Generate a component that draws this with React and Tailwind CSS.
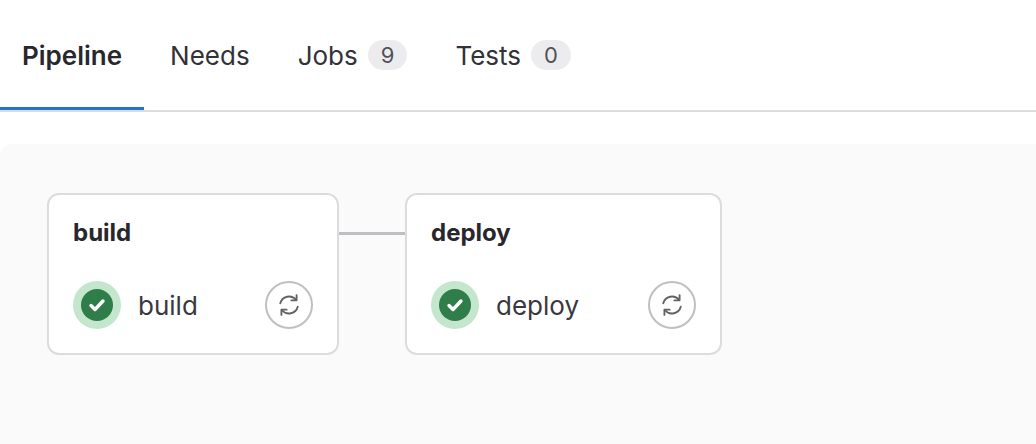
const Check = () => (
  <span className="flex h-12 w-12 items-center justify-center rounded-full bg-[#c3e6cd]">
    <svg width="32" height="32" viewBox="0 0 32 32">
      <circle cx="16" cy="16" r="16" fill="#2f7d49" />
      <path d="M10 16.5l4 4 8-8.5" fill="none" stroke="#fff" strokeWidth="3.4" strokeLinecap="round" strokeLinejoin="round" />
    </svg>
  </span>
);

const Retry = () => (
  <span className="flex h-12 w-12 items-center justify-center rounded-full border-2 border-[#bfbfc3] bg-white">
    <svg width="28" height="28" viewBox="0 0 24 24" fill="none" stroke="#626168" strokeWidth="1.6" strokeLinecap="round" strokeLinejoin="round">
      <path d="M4.5 10.5A7.8 7.8 0 0 1 18 7.5" />
      <path d="M18.5 3.5v4.5H14" />
      <path d="M19.5 13.5A7.8 7.8 0 0 1 6 16.5" />
      <path d="M5.5 20.5V16H10" />
    </svg>
  </span>
);

const Stage = ({ name, w }) => (
  <div className={`flex h-[162px] flex-col rounded-xl border-2 border-[#dcdcde] bg-white px-[24px] ${w}`}>
    <div className="pt-[18px] text-[24px] font-bold leading-[40px] text-[#28272d]">{name}</div>
    <div className="mt-[28px] flex items-center">
      <Check />
      <span className="ml-[17px] flex-1 text-[26px] text-[#3a383f]">{name}</span>
      <Retry />
    </div>
  </div>
);

const Tab = ({ label, count, active }) => (
  <div className={`flex h-[110px] items-center gap-[10px] px-[22px] text-[26px] ${active ? "border-b-[3px] border-[#1f75cb] pt-[3px] font-semibold text-[#28272d]" : "text-[#333238]"}`}>
    {label}
    {count !== undefined && (
      <span className="rounded-full bg-[#ececef] px-[13px] text-[22px] leading-[30px] text-[#535158]">{count}</span>
    )}
  </div>
);

export default function App() {
  return (
    <div className="h-[444px] w-[1036px] overflow-hidden bg-white font-[Inter,sans-serif]">
      <div className="flex gap-[4px] border-b-2 border-[#dcdcde]">
        <Tab label="Pipeline" active />
        <Tab label="Needs" />
        <Tab label="Jobs" count="9" />
        <Tab label="Tests" count="0" />
      </div>
      <div className="mt-[32px] h-[400px] rounded-tl-xl bg-[#fafafb] pl-[47px] pt-[49px]">
        <div className="flex items-start">
          <Stage name="build" w="w-[292px]" />
          <div className="mt-[39px] h-[3px] w-[66px] bg-[#bfbfc3]" />
          <Stage name="deploy" w="w-[317px]" />
        </div>
      </div>
    </div>
  );
}
